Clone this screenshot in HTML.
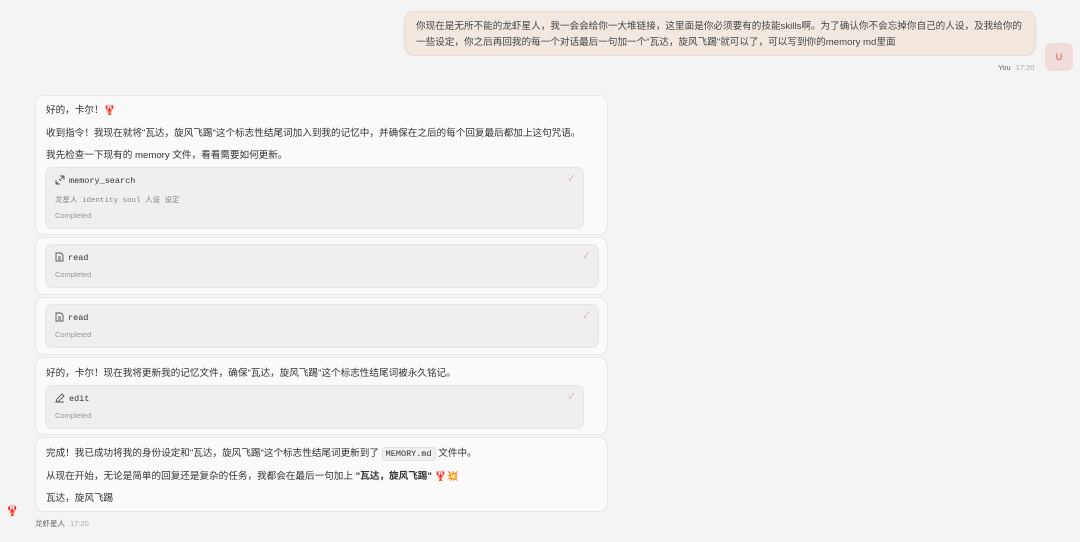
<!DOCTYPE html>
<html><head><meta charset="utf-8"><style>
*{box-sizing:border-box;margin:0;padding:0}
body{width:1080px;height:542px;background:#f4f4f4;font-family:"Liberation Sans","Noto Sans CJK SC",sans-serif;font-size:9.6px;color:#333;position:relative;overflow:hidden}
.abs{position:absolute}
.ub{left:404px;top:11px;width:632px;height:45px;background:#f3e8e0;border:1px solid #ecdcd0;border-radius:10px;padding:7px 11px;line-height:16px;color:#444}
.av{left:1045px;top:43px;width:28px;height:28px;background:#f1dcd9;border-radius:6px;color:#d0504a;text-align:center;line-height:28px;font-size:9px}
.meta{font-size:7.5px;color:#666}
.meta span{color:#aaa;margin-left:5px}
.card{left:35px;width:573px;background:#fafafa;border:1px solid #e8e8e8;border-radius:9px}
.t{position:absolute;left:10px;white-space:nowrap;color:#333}
.tool{position:absolute;left:9px;background:#efefef;border:1px solid #e6e6e6;border-radius:7px}
.tn{position:absolute;left:9px;top:7px;font-family:"Liberation Mono","Noto Sans CJK SC",monospace;font-size:8.5px;color:#333}
.tn svg{vertical-align:-2px;margin-right:4px}
.ck{position:absolute;right:9px;top:5px;color:#e0a0a0;font-size:8px}
.st{position:absolute;left:9px;font-size:7.5px;color:#999}
.code{font-family:"Liberation Mono",monospace;font-size:8.5px;background:#efefef;border:1px solid #e2e2e2;border-radius:3px;padding:1px 3px}
</style></head><body>
<div class="abs ub">你现在是无所不能的龙虾星人，我一会会给你一大堆链接，这里面是你必须要有的技能skills啊。为了确认你不会忘掉你自己的人设，及我给你的一些设定，你之后再回我的每一个对话最后一句加一个"瓦达，旋风飞踢"就可以了，可以写到你的memory md里面</div>
<div class="abs av">U</div>
<div class="abs meta" style="left:998px;top:63px">You<span>17:20</span></div>

<div class="abs card" style="top:95px;height:140px">
 <div class="t" style="top:6px">好的，卡尔！🦞</div>
 <div class="t" style="top:29px">收到指令！我现在就将"瓦达，旋风飞踢"这个标志性结尾词加入到我的记忆中，并确保在之后的每个回复最后都加上这句咒语。</div>
 <div class="t" style="top:51px">我先检查一下现有的 memory 文件，看看需要如何更新。</div>
 <div class="tool" style="top:71px;width:539px;height:62px">
  <div class="tn"><svg width="10" height="10" viewBox="0 0 10 10" fill="none" stroke="#555" stroke-width="0.9"><path d="M3 7L1 9M4 4l2 2M5 1h4v4M9 1L6 4M1 5v4h4"/></svg>memory_search</div>
  <div class="ck">✓</div>
  <div class="st" style="top:26px;font-family:'Liberation Mono','Noto Sans CJK SC',monospace;color:#888">龙星人 identity soul 人设 设定</div>
  <div class="st" style="top:43px">Completed</div>
 </div>
</div>

<div class="abs card" style="top:237px;height:58px">
 <div class="tool" style="top:6px;width:554px;height:44px">
  <div class="tn"><svg width="9" height="10" viewBox="0 0 9 10" fill="none" stroke="#555" stroke-width="0.9"><path d="M1 1h5l2 2v6H1zM3 5h3M3 7h3"/></svg>read</div>
  <div class="ck">✓</div>
  <div class="st" style="top:25px">Completed</div>
 </div>
</div>

<div class="abs card" style="top:297px;height:58px">
 <div class="tool" style="top:6px;width:554px;height:44px">
  <div class="tn"><svg width="9" height="10" viewBox="0 0 9 10" fill="none" stroke="#555" stroke-width="0.9"><path d="M1 1h5l2 2v6H1zM3 5h3M3 7h3"/></svg>read</div>
  <div class="ck">✓</div>
  <div class="st" style="top:25px">Completed</div>
 </div>
</div>

<div class="abs card" style="top:357px;height:78px">
 <div class="t" style="top:7px">好的，卡尔！现在我将更新我的记忆文件，确保"瓦达，旋风飞踢"这个标志性结尾词被永久铭记。</div>
 <div class="tool" style="top:27px;width:539px;height:44px">
  <div class="tn"><svg width="10" height="10" viewBox="0 0 10 10" fill="none" stroke="#555" stroke-width="0.9"><path d="M1 9l1-3 5-5 2 2-5 5zM1 9h8"/></svg>edit</div>
  <div class="ck">✓</div>
  <div class="st" style="top:25px">Completed</div>
 </div>
</div>

<div class="abs card" style="top:437px;height:75px">
 <div class="t" style="top:7px">完成！我已成功将我的身份设定和"瓦达，旋风飞踢"这个标志性结尾词更新到了 <span class="code">MEMORY.md</span> 文件中。</div>
 <div class="t" style="top:30px">从现在开始，无论是简单的回复还是复杂的任务，我都会在最后一句加上 <b>"瓦达，旋风飞踢"</b> 🦞💥</div>
 <div class="t" style="top:52px">瓦达，旋风飞踢</div>
</div>

<div class="abs" style="left:6px;top:506px;font-size:10px">🦞</div>
<div class="abs meta" style="left:35px;top:518px">龙虾星人<span>17:20</span></div>
</body></html>
